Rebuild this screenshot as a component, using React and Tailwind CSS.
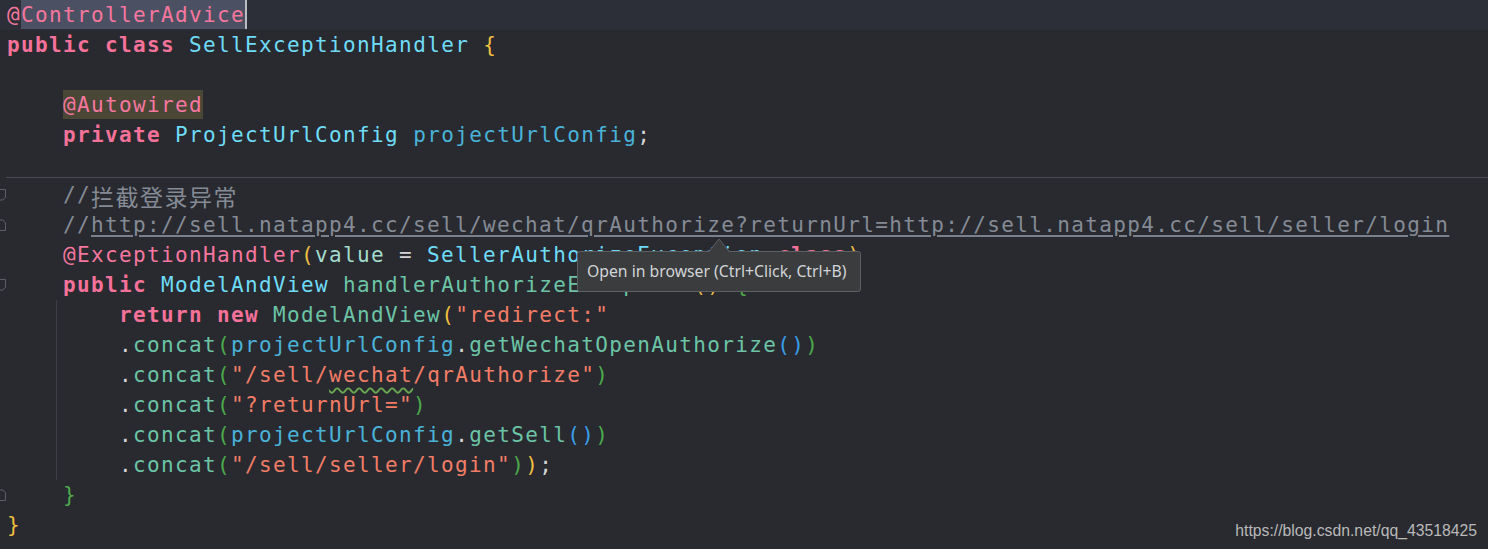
import React from "react";

const K = {
  kw: "text-[#f47199] font-bold",
  ann: "text-[#f5769f]",
  cls: "text-[#6fdcf7]",
  fld: "text-[#4ab2d8]",
  mth: "text-[#6cc4a6]",
  str: "text-[#f27d66]",
  cmt: "text-[#858b95]",
  pl: "text-[#d4d4d4]",
  y: "text-[#efbf3f]",
  g: "text-[#4caa4a]",
  b: "text-[#3b9de8]",
  prm: "text-[#a3dccd]",
};

function Fold({ dir }) {
  return (
    <svg width="7" height="14" viewBox="0 0 7 14" className="block">
      {dir === "down" ? (
        <path d="M-1 1.5 H5.5 V9 L3 12 H-1" fill="none" stroke="#5c5f66" strokeWidth="1" />
      ) : (
        <path d="M-1 12.5 H5.5 V5 L3 2 H-1" fill="none" stroke="#5c5f66" strokeWidth="1" />
      )}
    </svg>
  );
}

function Row({ fold, indent = 0, guide = false, className = "", children }) {
  return (
    <div className={"flex h-[30px] items-center " + className}>
      <div className="flex w-[7px] shrink-0 items-center">{fold ? <Fold dir={fold} /> : null}</div>
      {guide ? (
        <div className="flex h-full shrink-0">
          <div className="w-[49px]" />
          <div className="w-px bg-[#3b3e45]" />
          <div className="w-[62px]" />
        </div>
      ) : indent ? (
        <div className={indent === 4 ? "w-[56px] shrink-0" : "w-[112px] shrink-0"} />
      ) : null}
      <div className="flex h-full flex-1 items-center whitespace-pre pt-[2px]">{children}</div>
    </div>
  );
}

const T = ({ c, children, extra = "" }) => <span className={K[c] + " " + extra}>{children}</span>;

export default function App() {
  return (
    <div
      className="relative h-[549px] w-[1488px] overflow-hidden bg-[#282a30] text-[21px] tracking-[1.36px]"
      style={{ fontFamily: '"DejaVu Sans Mono", "Liberation Mono", monospace' }}
    >
      <div className="flex flex-col">
        {/* 1 */}
        <div className="flex h-[30px] items-start bg-[#2c2f38]">
          <div className="w-[7px] shrink-0" />
          <div className="flex h-[29px] items-center whitespace-pre pt-[2px]">
            <T c="ann">@</T>
          </div>
          <div className="flex h-[29px] items-center whitespace-pre bg-[#4b5162] pt-[2px]">
            <T c="ann">ControllerAdvice</T>
          </div>
          <div className="h-[29px] w-[2px] bg-[#b9bcc2]" />
        </div>
        {/* 2 */}
        <Row>
          <T c="kw">public</T>
          <T c="pl"> </T>
          <T c="kw">class</T>
          <T c="pl"> </T>
          <T c="cls">SellExceptionHandler</T>
          <T c="pl"> </T>
          <T c="y">{"{"}</T>
        </Row>
        {/* 3 */}
        <Row />
        {/* 4 */}
        <div className="flex h-[30px] items-start">
          <div className="w-[63px] shrink-0" />
          <div className="flex h-[29px] items-center whitespace-pre bg-[#4a4737] pt-[2px]">
            <T c="ann">@Autowired</T>
          </div>
        </div>
        {/* 5 */}
        <Row indent={4}>
          <T c="kw">private</T>
          <T c="pl"> </T>
          <T c="cls">ProjectUrlConfig</T>
          <T c="pl"> </T>
          <T c="fld">projectUrlConfig</T>
          <T c="pl">;</T>
        </Row>
        {/* 6 */}
        <div className="flex h-[30px] flex-col">
          <div className="h-[27px]" />
          <div className="ml-[6px] h-px bg-[#474a51]" />
          <div className="h-[2px]" />
        </div>
        {/* 7 */}
        <Row fold="down" indent={4}>
          <T c="cmt">//</T>
          <span
            className="text-[23px] tracking-[1.5px] text-[#858b95]"
            style={{ fontFamily: '"Noto Sans CJK SC", "DejaVu Sans Mono", sans-serif' }}
          >
            拦截登录异常
          </span>
        </Row>
        {/* 8 */}
        <Row fold="up" indent={4}>
          <T c="cmt">//</T>
          <T c="cmt" extra="underline decoration-[#7b818c] underline-offset-[3px]">
            http://sell.natapp4.cc/sell/wechat/qrAuthorize?returnUrl=http://sell.natapp4.cc/sell/seller/login
          </T>
        </Row>
        {/* 9 */}
        <Row indent={4}>
          <T c="ann">@ExceptionHandler</T>
          <T c="y">(</T>
          <T c="prm">value</T>
          <T c="pl"> = </T>
          <T c="cls">SellerAuthorizeException</T>
          <T c="pl">.</T>
          <T c="kw">class</T>
          <T c="y">)</T>
        </Row>
        {/* 10 */}
        <Row fold="down" indent={4}>
          <T c="kw">public</T>
          <T c="pl"> </T>
          <T c="cls">ModelAndView</T>
          <T c="pl"> </T>
          <T c="mth">handlerAuthorizeException</T>
          <T c="y">()</T>
          <T c="pl"> </T>
          <T c="g">{"{"}</T>
        </Row>
        {/* 11 */}
        <Row guide>
          <T c="kw">return</T>
          <T c="pl"> </T>
          <T c="kw">new</T>
          <T c="pl"> </T>
          <T c="mth">ModelAndView</T>
          <T c="y">(</T>
          <T c="str">"redirect:"</T>
        </Row>
        {/* 12 */}
        <Row guide>
          <T c="pl">.</T>
          <T c="mth">concat</T>
          <T c="g">(</T>
          <T c="fld">projectUrlConfig</T>
          <T c="pl">.</T>
          <T c="mth">getWechatOpenAuthorize</T>
          <T c="b">()</T>
          <T c="g">)</T>
        </Row>
        {/* 13 */}
        <Row guide>
          <T c="pl">.</T>
          <T c="mth">concat</T>
          <T c="g">(</T>
          <T c="str">"/sell/</T>
          <T c="str" extra="underline decoration-wavy decoration-[#6aa84f] decoration-[1.5px] underline-offset-[5px]">
            wechat
          </T>
          <T c="str">/qrAuthorize"</T>
          <T c="g">)</T>
        </Row>
        {/* 14 */}
        <Row guide>
          <T c="pl">.</T>
          <T c="mth">concat</T>
          <T c="g">(</T>
          <T c="str">"?returnUrl="</T>
          <T c="g">)</T>
        </Row>
        {/* 15 */}
        <Row guide>
          <T c="pl">.</T>
          <T c="mth">concat</T>
          <T c="g">(</T>
          <T c="fld">projectUrlConfig</T>
          <T c="pl">.</T>
          <T c="mth">getSell</T>
          <T c="b">()</T>
          <T c="g">)</T>
        </Row>
        {/* 16 */}
        <Row guide>
          <T c="pl">.</T>
          <T c="mth">concat</T>
          <T c="g">(</T>
          <T c="str">"/sell/seller/login"</T>
          <T c="g">)</T>
          <T c="y">)</T>
          <T c="pl">;</T>
        </Row>
        {/* 17 */}
        <Row fold="up" indent={4}>
          <T c="g">{"}"}</T>
        </Row>
        {/* 18 */}
        <Row>
          <T c="y">{"}"}</T>
          <span
            className="ml-auto mr-[11px] pt-[10px] text-[15.75px] leading-none tracking-normal text-[#b9b9b9]"
            style={{ fontFamily: '"Liberation Sans", Arial, sans-serif' }}
          >
            https://blog.csdn.net/qq_43518425
          </span>
        </Row>
      </div>

      {/* tooltip */}
      <div className="absolute left-[577px] top-[251px] flex h-[41px] w-[284px] items-center rounded-[3px] border border-[#5d6063] bg-[#3a3c3e] pl-[9px] tracking-normal">
        <span
          className="text-[15.75px] text-[#d2d5d8]"
          style={{ fontFamily: '"Noto Sans", "Open Sans", sans-serif' }}
        >
          Open in browser (Ctrl+Click, Ctrl+B)
        </span>
      </div>
      <svg className="absolute left-[708px] top-[238px]" width="22" height="15" viewBox="0 0 22 15">
        <polygon points="0,14.5 11,1 22,14.5" fill="#3a3c3e" />
        <polyline points="0.5,14 11,1 21.5,14" fill="none" stroke="#5d6063" strokeWidth="1" />
      </svg>
    </div>
  );
}
